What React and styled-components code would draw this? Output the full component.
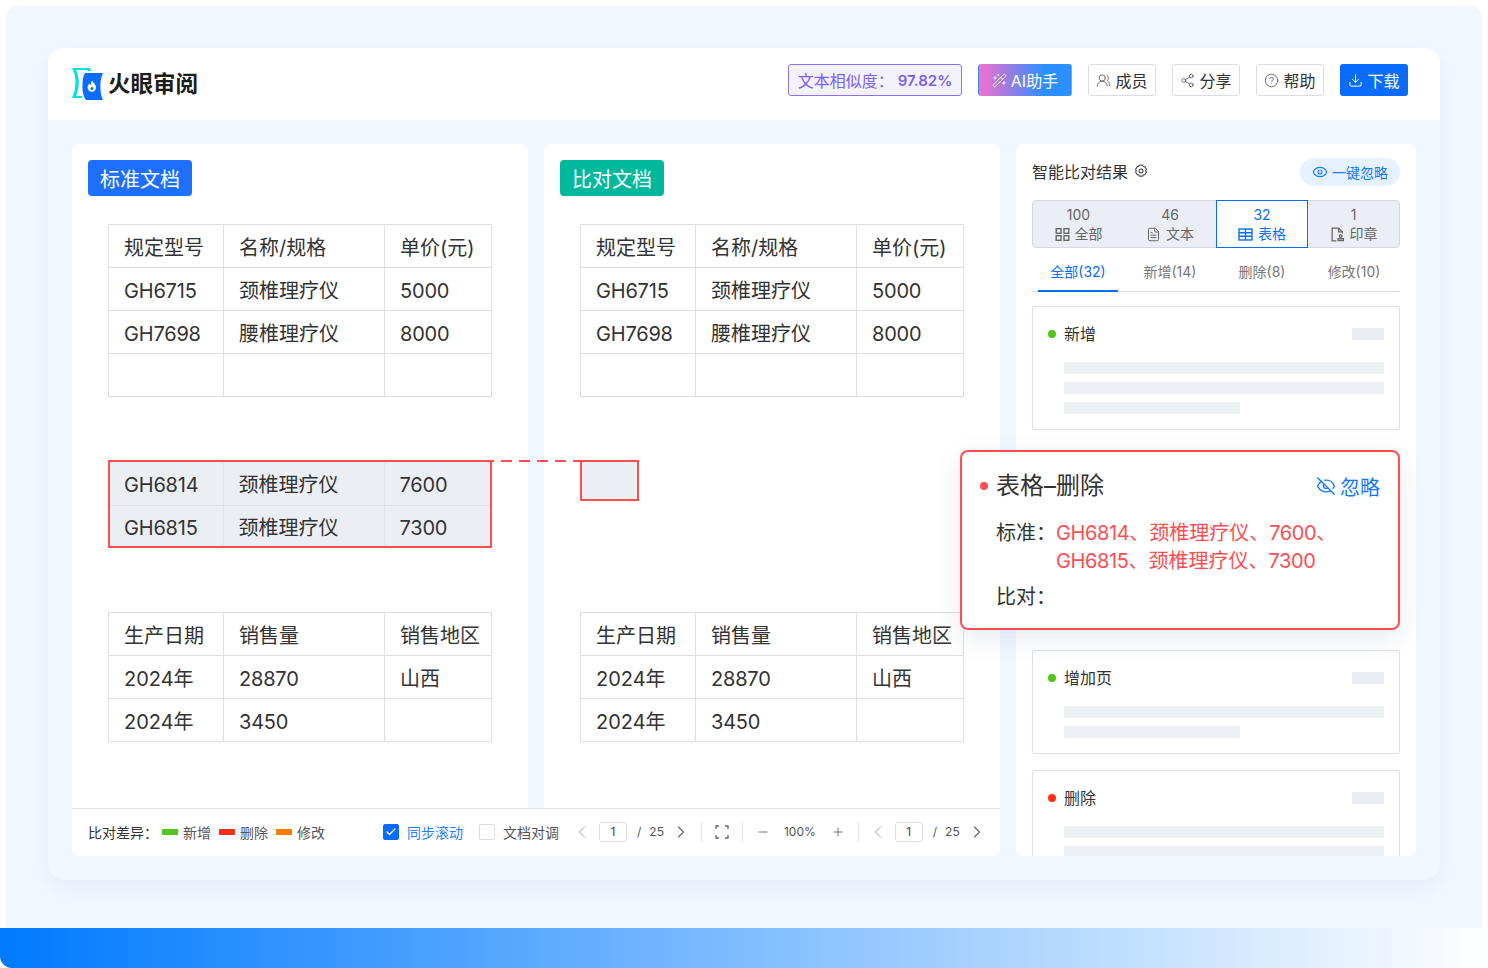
import React from 'react';
import styled, { createGlobalStyle } from 'styled-components';
import {
  Check,
  ChevronLeft,
  ChevronRight,
  CircleHelp,
  Download,
  Eye,
  EyeOff,
  FileText,
  Minus,
  Plus,
  Share2,
  UsersRound,
  WandSparkles,
} from 'lucide-react';

const GlobalStyle = createGlobalStyle`
  html, body {
    margin: 0;
    padding: 0;
    background: #fff;
    font-family: Inter, "Noto Sans CJK SC", sans-serif;
    color: #333;
  }
  * {
    box-sizing: border-box;
  }
`;

const Page = styled.div`
  width: 1488px;
  height: 968px;
  display: flex;
  flex-direction: column;
  overflow: hidden;
`;

const Frame = styled.div`
  height: 922px;
  margin: 6px 6px 0;
  padding: 42px;
  background: #f2f7ff;
  border-radius: 12px 12px 0 0;
`;

const BottomBand = styled.div`
  height: 40px;
  background: linear-gradient(90deg, #007aff 0%, #ffffff 100%);
  border-bottom-left-radius: 12px;
`;

const AppCard = styled.div`
  height: 832px;
  border-radius: 16px;
  background: #f1f6ff;
  box-shadow: 0 8px 24px rgba(40, 80, 160, 0.06);
  position: relative;
`;

const Header = styled.header`
  height: 72px;
  padding: 0 32px 0 24px;
  display: flex;
  align-items: center;
  background: #fff;
  border-radius: 16px 16px 0 0;
`;

const Logo = styled.div`
  display: flex;
  align-items: center;
  gap: 4px;
  margin-right: auto;
`;

const LogoText = styled.span`
  font-size: 22.5px;
  line-height: 1;
  font-weight: 700;
  color: #1c1c1c;
`;

const Actions = styled.div`
  display: flex;
  gap: 16px;
  margin-bottom: 8px;
`;

const Similarity = styled.div`
  height: 32px;
  width: 174px;
  border: 1px solid #8b70f0;
  border-radius: 3px;
  background: #f4f2ff;
  color: #7d5ff0;
  font-size: 16px;
  display: flex;
  align-items: center;
  justify-content: center;
  white-space: nowrap;
  b {
    font-size: 15px;
    font-weight: 600;
    margin-left: 4px;
  }
`;

const HeadButton = styled.button`
  height: 32px;
  width: ${(p) => p.$width || 68}px;
  padding: 0;
  border: 1px solid ${(p) => (p.$variant ? 'transparent' : '#d9dde3')};
  border-radius: 3px;
  font: inherit;
  font-size: 16px;
  display: flex;
  align-items: center;
  justify-content: center;
  gap: 4px;
  color: ${(p) => (p.$variant ? '#fff' : '#333')};
  background: ${(p) =>
    p.$variant === 'ai'
      ? 'linear-gradient(90deg, #f56fcb 0%, #2a8fff 72%)'
      : p.$variant === 'primary'
        ? '#0a6cff'
        : '#fff'};
`;

const Main = styled.main`
  height: 760px;
  padding: 24px;
  display: flex;
  gap: 16px;
`;

const LeftColumn = styled.div`
  width: 928px;
  display: flex;
  flex-direction: column;
  position: relative;
`;

const Docs = styled.div`
  height: 664px;
  display: grid;
  grid-template-columns: 456px 456px;
  gap: 16px;
`;

const DocPane = styled.section`
  background: #fff;
  border-radius: 8px 8px 0 0;
  padding: 16px;
`;

const DocBadge = styled.div`
  width: 104px;
  height: 36px;
  border-radius: 4px;
  background: ${(p) => p.$color};
  color: #fff;
  font-size: 20px;
  display: flex;
  align-items: center;
  justify-content: center;
`;

const DocBody = styled.div`
  margin: 28px 0 0 20px;
  width: 384px;
  display: flex;
  flex-direction: column;
`;

const Table = styled.table`
  width: ${(p) => (p.$marked ? 380 : 383)}px;
  table-layout: fixed;
  border-collapse: collapse;
  font-size: 20px;
  color: #333;
`;

const Cell = styled.td`
  height: 43px;
  padding: ${(p) => (p.$latin ? '3px' : '0')} 0 0 15px;
  letter-spacing: ${(p) => (p.$latin ? '-0.2px' : '0')};
  border: 1px solid ${(p) => (p.$marked ? '#e0e3e8' : '#dcdfe4')};
  white-space: nowrap;
  background: ${(p) => (p.$marked ? '#ebeff4' : '#fff')};
  ${(p) =>
    p.$marked &&
    `
    tr:first-child > & { border-top: 0; }
    tr:last-child > & { border-bottom: 0; }
    &:first-child { border-left: 0; padding-left: 14px; }
    &:last-child { border-right: 0; }
  `}
`;

const MarkedBlock = styled.div`
  margin: 63px 0 64px;
  height: 88px;
`;

const MarkedRows = styled.div`
  border: 2px solid #ff4d52;
  width: 384px;
  height: 88px;
  overflow: hidden;
`;

const EmptyMark = styled.div`
  width: 59px;
  height: 41px;
  background: #ebeff4;
  border: 2px solid #ff4d52;
`;

const DashedLink = styled.div`
  position: absolute;
  left: 420px;
  top: 316px;
  width: 88px;
  height: 2px;
  background: linear-gradient(90deg, #ff4d52 11px, transparent 11px) 9px 0 / 18px 2px repeat-x;
`;

const LegendBar = styled.footer`
  height: 48px;
  background: #fff;
  border-top: 1px solid #e3e6ea;
  border-radius: 0 0 8px 8px;
  padding: 0 0 2px 16px;
  display: flex;
  align-items: center;
  font-size: 14px;
  color: #555;
  white-space: nowrap;
`;

const LegendTitle = styled.span`
  color: #333;
  width: 74px;
`;

const Swatch = styled.i`
  width: 16px;
  height: 6px;
  margin-right: 5px;
  background: ${(p) => p.$color};
`;

const LegendLabel = styled.span`
  width: ${(p) => p.$width || 36}px;
`;

const CheckBox = styled.span`
  width: 16px;
  height: 16px;
  border-radius: 2px;
  margin-right: 8px;
  display: flex;
  align-items: center;
  justify-content: center;
  color: #fff;
  background: ${(p) => (p.$on ? '#0a6cff' : '#fff')};
  border: 1px solid ${(p) => (p.$on ? '#0a6cff' : '#d9dde3')};
`;

const SyncLabel = styled.span`
  width: ${(p) => (p.$on ? 72 : 71)}px;
  color: ${(p) => (p.$on ? '#2a7fff' : '#555')};
`;

const Pager = styled.div`
  display: flex;
  align-items: center;
  font-size: 12px;
  color: #555;
`;

const ZoomValue = styled(Pager)`
  margin: 0 15px 0 14px;
`;

const PageInput = styled.span`
  width: 28px;
  height: 20px;
  margin: 0 10px 0 9px;
  border: 1px solid #d9dde3;
  border-radius: 3px;
  display: flex;
  align-items: center;
  justify-content: center;
  color: #444;
`;

const Slash = styled.span`
  margin-right: 8px;
`;

const VRule = styled.i`
  width: 1px;
  height: 20px;
  background: #e3e6ea;
  margin: 0 ${(p) => p.$right ?? 13}px 0 ${(p) => p.$left ?? 13}px;
`;

const IconSlot = styled.span`
  display: flex;
  color: ${(p) => p.$color || '#666'};
  margin: ${(p) => p.$margin || 0};
`;

const ResultPanel = styled.aside`
  width: 400px;
  height: 712px;
  background: #fff;
  border-radius: 8px;
  padding: 14px 16px 0;
  overflow: hidden;
`;

const ResultHead = styled.div`
  height: 28px;
  display: flex;
  align-items: center;
  justify-content: space-between;
`;

const ResultTitle = styled.div`
  display: flex;
  align-items: center;
  gap: 6px;
  padding-bottom: 2px;
  font-size: 16px;
  color: #333;
`;

const IgnoreAll = styled.button`
  width: 100px;
  height: 28px;
  border: 0;
  padding: 0;
  border-radius: 14px;
  background: #e6f2ff;
  color: #1677ff;
  font: inherit;
  font-size: 14px;
  display: flex;
  align-items: center;
  justify-content: center;
  gap: 4px;
`;

const TypeTabs = styled.div`
  margin-top: 14px;
  height: 48px;
  display: grid;
  grid-template-columns: 91px 92px 92px 91px;
  background: #ebeff5;
  border: 1px solid #d5dae2;
  border-radius: 4px;
`;

const TypeTab = styled.div`
  margin: ${(p) => (p.$active ? '-1px 0' : '0')};
  border: ${(p) => (p.$active ? '1px solid #0a6cff' : '0')};
  background: ${(p) => (p.$active ? '#fff' : 'transparent')};
  color: ${(p) => (p.$active ? '#0a6cff' : '#666')};
  font-size: 14px;
  display: flex;
  flex-direction: column;
  align-items: center;
  justify-content: center;
  line-height: 20px;
`;

const TypeCount = styled.span`
  padding-top: 1px;
  margin-bottom: -1px;
`;

const TypeLabel = styled.span`
  display: flex;
  align-items: center;
  gap: 5px;
`;

const SubTabs = styled.div`
  height: 36px;
  margin-top: 8px;
  display: grid;
  grid-template-columns: repeat(4, 92px);
  border-bottom: 1px solid #d8dee8;
`;

const SubTab = styled.div`
  margin: 0 6px -1px;
  font-size: 14px;
  padding-bottom: 4px;
  display: flex;
  align-items: center;
  justify-content: center;
  white-space: nowrap;
  color: ${(p) => (p.$active ? '#0a6cff' : '#777')};
  border-bottom: 2px solid ${(p) => (p.$active ? '#0a6cff' : 'transparent')};
`;

const ResultList = styled.div`
  margin-top: 14px;
  display: flex;
  flex-direction: column;
  gap: 16px;
`;

const ResultCard = styled.div`
  flex: none;
  border: 1px solid #dde2ea;
  border-radius: 2px;
  padding: 17px 15px 15px;
`;

const CoveredSlot = styled.div`
  flex: none;
  height: 188px;
`;

const CardHead = styled.div`
  height: 20px;
  display: flex;
  align-items: center;
  font-size: 16px;
  line-height: 18px;
  color: #333;
  margin-bottom: 18px;
`;

const Dot = styled.i`
  flex: none;
  width: ${(p) => p.$size || 8}px;
  height: ${(p) => p.$size || 8}px;
  border-radius: 50%;
  background: ${(p) => p.$color};
  margin-right: 8px;
`;

const CardTag = styled.i`
  width: 32px;
  height: 12px;
  margin-left: auto;
  border-radius: 1px;
  background: #e9ecf1;
`;

const SkeletonBar = styled.div`
  height: 12px;
  margin: 0 0 8px 16px;
  width: ${(p) => p.$width || 320}px;
  background: #edf0f4;
  border-radius: 1px;
  &:last-child {
    margin-bottom: 0;
  }
`;

const Popover = styled.div`
  position: absolute;
  left: 912px;
  top: 402px;
  width: 440px;
  height: 180px;
  background: #fff;
  border: 2px solid #ff4d52;
  border-radius: 8px;
  box-shadow: 0 8px 28px rgba(30, 50, 90, 0.1);
  padding: 17px 18px 0;
  z-index: 2;
`;

const PopHead = styled.div`
  height: 34px;
  display: flex;
  align-items: center;
`;

const PopTitle = styled.div`
  font-size: 24px;
  line-height: 34px;
  color: #333;
`;

const PopIgnore = styled.div`
  margin-left: auto;
  display: flex;
  align-items: center;
  gap: 4px;
  font-size: 20px;
  color: #1677ff;
`;

const PopRow = styled.div`
  display: flex;
  margin: ${(p) => p.$top || 0}px 0 0 16px;
  font-size: 20px;
  line-height: 28px;
  color: #333;
`;

const PopKey = styled.span`
  width: 60px;
  flex: none;
`;

const PopValue = styled.span`
  color: #ff4d52;
`;

const Num = styled.span`
  letter-spacing: -0.4px;
`;

const LogoMark = () => (
  <svg width="32" height="32" viewBox="0 0 32 32">
    <path
      d="M0 0h18l1 3h-3l-.5-1H4.2c2 5 2.6 8 2.6 12s-.6 9-2.6 14H10v2H0c2.6-6 3.4-10 3.4-16S2.6 6 0 0z"
      fill="#00e4e4"
    />
    <path
      d="M13 5h18c-2.2 4.6-2.6 9-2.6 13.500S29 28 31 32H14c-2-2.600-3.600-7-3.600-13S11 8 13 5z"
      fill="#0a6cff"
    />
    <path
      d="M20.500 12.500c.4 2.400 3.500 3.600 3.500 7a4.200 4.200 0 0 1-8.400 0c0-1.800.8-3 1.800-4 .2 1 .6 1.500 1.200 1.700.4-1.500.2-3.100 1.900-4.700z"
      fill="#fff"
    />
    <circle cx="20" cy="20.500" r="1.500" fill="#0a6cff" />
  </svg>
);

const HexGear = () => (
  <svg width="14" height="14" viewBox="0 0 14 14" fill="none" stroke="#555" strokeWidth="1.200" strokeLinejoin="round">
    <path d="M5.400 1.200h3.200l.7 1.300 1.500.1 1.600 2.700-.8 1.200.8 1.500-1.600 2.700-1.500.1-.7 1.300H5.400l-.7-1.300-1.500-.1-1.600-2.700.8-1.500-.8-1.200 1.600-2.700 1.500-.1z" />
    <circle cx="7" cy="7" r="1.900" />
  </svg>
);

const GridIcon = () => (
  <svg width="15" height="15" viewBox="0 0 15 15" fill="none" stroke="currentColor" strokeWidth="1.400">
    <rect x="1.200" y="1.700" width="4.800" height="4.600" />
    <rect x="9" y="1.700" width="4.800" height="4.600" />
    <rect x="1.200" y="8.700" width="4.800" height="4.600" />
    <rect x="9" y="8.700" width="4.800" height="4.600" />
  </svg>
);

const TableIcon = () => (
  <svg width="15" height="15" viewBox="0 0 15 15" fill="none" stroke="currentColor" strokeWidth="1.400">
    <rect x="1" y="2" width="13" height="11" />
    <path d="M1 5.700h13M1 9.300h13M7.500 2v11" />
  </svg>
);

const StampFile = () => (
  <svg width="15" height="15" viewBox="0 0 14 14" fill="none" stroke="currentColor" strokeWidth="1.200">
    <path d="M6 13H2V1h6l3.500 3.500V6" />
    <path d="M8 1v3.500h3.500" />
    <circle cx="10" cy="8.500" r="1.200" />
    <path d="M7.500 12.600h5v-1.800h-5z" />
  </svg>
);

const Corners = () => (
  <svg width="14" height="14" viewBox="0 0 14 14" fill="none" stroke="#666" strokeWidth="1.300">
    <path d="M1 4V1h3M10 1h3v3M13 10v3h-3M4 13H1v-3" />
  </svg>
);

const topRows = [
  ['规定型号', '名称/规格', '单价(元)'],
  ['GH6715', '颈椎理疗仪', '5000'],
  ['GH7698', '腰椎理疗仪', '8000'],
  ['', '', ''],
];

const markedRows = [
  ['GH6814', '颈椎理疗仪', '7600'],
  ['GH6815', '颈椎理疗仪', '7300'],
];

const salesRows = [
  ['生产日期', '销售量', '销售地区'],
  ['2024年', '28870', '山西'],
  ['2024年', '3450', ''],
];

const isLatin = (text) => /^[A-Za-z0-9]+$/.test(text);

const DataTable = ({ rows, marked }) => (
  <Table $marked={marked}>
    <colgroup>
      <col width={marked ? 113 : 115} />
      <col width="161" />
      <col width={marked ? 106 : 107} />
    </colgroup>
    <tbody>
      {rows.map((row, i) => (
        <tr key={i}>
          {row.map((cell, j) => (
            <Cell key={j} $marked={marked} $latin={isLatin(cell)}>
              {cell}
            </Cell>
          ))}
        </tr>
      ))}
    </tbody>
  </Table>
);

const PagerGroup = () => (
  <Pager>
    <IconSlot $color="#c4c8ce" $margin="0 -2px">
      <ChevronLeft size={20} strokeWidth={1.4} />
    </IconSlot>
    <PageInput>1</PageInput>
    <Slash>/</Slash>
    <span>25</span>
    <IconSlot $margin="0 -2px 0 7px">
      <ChevronRight size={20} strokeWidth={1.4} />
    </IconSlot>
  </Pager>
);

export default function App() {
  return (
    <Page>
      <GlobalStyle />
      <Frame>
        <AppCard>
          <Header>
            <Logo>
              <LogoMark />
              <LogoText>火眼审阅</LogoText>
            </Logo>
            <Actions>
              <Similarity>
                文本相似度：<b>97.82%</b>
              </Similarity>
              <HeadButton $variant="ai" $width={94}>
                <WandSparkles size={15} strokeWidth={1.6} />
                AI助手
              </HeadButton>
              <HeadButton>
                <IconSlot>
                  <UsersRound size={15} strokeWidth={1.5} />
                </IconSlot>
                成员
              </HeadButton>
              <HeadButton>
                <IconSlot>
                  <Share2 size={15} strokeWidth={1.5} />
                </IconSlot>
                分享
              </HeadButton>
              <HeadButton>
                <IconSlot>
                  <CircleHelp size={15} strokeWidth={1.5} />
                </IconSlot>
                帮助
              </HeadButton>
              <HeadButton $variant="primary">
                <Download size={15} strokeWidth={1.6} />
                下载
              </HeadButton>
            </Actions>
          </Header>
          <Main>
            <LeftColumn>
              <Docs>
                <DocPane>
                  <DocBadge $color="#1f6fff">标准文档</DocBadge>
                  <DocBody>
                    <DataTable rows={topRows} />
                    <MarkedBlock>
                      <MarkedRows>
                        <DataTable rows={markedRows} marked />
                      </MarkedRows>
                    </MarkedBlock>
                    <DataTable rows={salesRows} />
                  </DocBody>
                </DocPane>
                <DocPane>
                  <DocBadge $color="#00b89c">比对文档</DocBadge>
                  <DocBody>
                    <DataTable rows={topRows} />
                    <MarkedBlock>
                      <EmptyMark />
                    </MarkedBlock>
                    <DataTable rows={salesRows} />
                  </DocBody>
                </DocPane>
              </Docs>
              <DashedLink />
              <LegendBar>
                <LegendTitle>比对差异：</LegendTitle>
                <Swatch $color="#52c41a" />
                <LegendLabel>新增</LegendLabel>
                <Swatch $color="#ff3016" />
                <LegendLabel>删除</LegendLabel>
                <Swatch $color="#ff7d00" />
                <LegendLabel $width={86}>修改</LegendLabel>
                <CheckBox $on>
                  <Check size={12} strokeWidth={2.5} />
                </CheckBox>
                <SyncLabel $on>同步滚动</SyncLabel>
                <CheckBox />
                <SyncLabel>文档对调</SyncLabel>
                <PagerGroup />
                <VRule $left={12} />
                <IconSlot>
                  <Corners />
                </IconSlot>
                <VRule />
                <IconSlot>
                  <Minus size={14} strokeWidth={1.5} />
                </IconSlot>
                <ZoomValue>100%</ZoomValue>
                <IconSlot>
                  <Plus size={14} strokeWidth={1.5} />
                </IconSlot>
                <VRule $right={11} />
                <PagerGroup />
              </LegendBar>
            </LeftColumn>
            <ResultPanel>
              <ResultHead>
                <ResultTitle>
                  智能比对结果
                  <HexGear />
                </ResultTitle>
                <IgnoreAll>
                  <Eye size={16} strokeWidth={1.7} />
                  一键忽略
                </IgnoreAll>
              </ResultHead>
              <TypeTabs>
                <TypeTab>
                  <TypeCount>100</TypeCount>
                  <TypeLabel>
                    <GridIcon />
                    全部
                  </TypeLabel>
                </TypeTab>
                <TypeTab>
                  <TypeCount>46</TypeCount>
                  <TypeLabel>
                    <FileText size={15} strokeWidth={1.6} />
                    文本
                  </TypeLabel>
                </TypeTab>
                <TypeTab $active>
                  <TypeCount>32</TypeCount>
                  <TypeLabel>
                    <TableIcon />
                    表格
                  </TypeLabel>
                </TypeTab>
                <TypeTab>
                  <TypeCount>1</TypeCount>
                  <TypeLabel>
                    <StampFile />
                    印章
                  </TypeLabel>
                </TypeTab>
              </TypeTabs>
              <SubTabs>
                <SubTab $active>全部(32)</SubTab>
                <SubTab>新增(14)</SubTab>
                <SubTab>删除(8)</SubTab>
                <SubTab>修改(10)</SubTab>
              </SubTabs>
              <ResultList>
                <ResultCard>
                  <CardHead>
                    <Dot $color="#52c41a" />
                    新增
                    <CardTag />
                  </CardHead>
                  <SkeletonBar />
                  <SkeletonBar />
                  <SkeletonBar $width={176} />
                </ResultCard>
                <CoveredSlot />
                <ResultCard>
                  <CardHead>
                    <Dot $color="#52c41a" />
                    增加页
                    <CardTag />
                  </CardHead>
                  <SkeletonBar />
                  <SkeletonBar $width={176} />
                </ResultCard>
                <ResultCard>
                  <CardHead>
                    <Dot $color="#ff3016" />
                    删除
                    <CardTag />
                  </CardHead>
                  <SkeletonBar />
                  <SkeletonBar />
                </ResultCard>
              </ResultList>
            </ResultPanel>
          </Main>
          <Popover>
            <PopHead>
              <Dot $color="#ff4d52" />
              <PopTitle>表格–删除</PopTitle>
              <PopIgnore>
                <EyeOff size={20} strokeWidth={1.6} />
                忽略
              </PopIgnore>
            </PopHead>
            <PopRow $top={16}>
              <PopKey>标准：</PopKey>
              <PopValue>
                <Num>GH6814</Num>、颈椎理疗仪、<Num>7600</Num>、
                <br />
                <Num>GH6815</Num>、颈椎理疗仪、<Num>7300</Num>
              </PopValue>
            </PopRow>
            <PopRow $top={8}>
              <PopKey>比对：</PopKey>
            </PopRow>
          </Popover>
        </AppCard>
      </Frame>
      <BottomBand />
    </Page>
  );
}
